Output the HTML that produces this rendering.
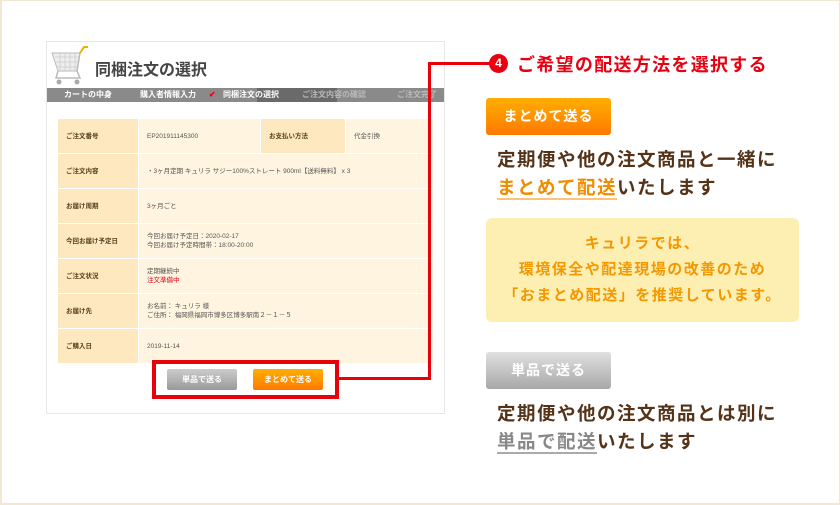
<!DOCTYPE html>
<html><head><meta charset="utf-8"><style>
*{margin:0;padding:0;box-sizing:border-box}
body{width:840px;height:505px;background:#fff;font-family:"Liberation Sans","Noto Sans CJK JP",sans-serif;position:relative;overflow:hidden}
.outer{position:absolute;left:0;top:0;width:840px;height:505px;border:1px solid #f3e6d2;border-width:1px 1px 2px 2px}
.abs{position:absolute}
.panel{left:46px;top:41px;width:399px;height:373px;border:1px solid #e6e6e6;background:#fff}
.title{left:95px;top:56px;font-size:16px;font-weight:bold;color:#444;white-space:nowrap}
.nav{left:47px;top:88px;width:397px;height:14px;background:#8a8a8a;font-size:8px;color:#fff;line-height:14px;font-weight:bold;white-space:nowrap}
.nav span{position:absolute;top:0}
.cur{left:210px;top:0;width:80px;height:14px;background:#6a6a6a}
table{position:absolute;left:57px;top:118px;width:377px;border-collapse:collapse;font-size:6.5px;color:#555}
td{height:35px;border:1px solid #fff;padding-left:8px;background:#fff4e0;vertical-align:middle;line-height:9px}
td.l{background:#fde8bf;font-weight:bold;color:#5a4020;width:81px}
.redbox{left:152px;top:360px;width:187px;height:39px;border:4px solid #e8000b}
.btn{border-radius:2px;color:#fff;font-weight:bold;text-align:center}
.sg{background:linear-gradient(#ccc,#999);}
.so{background:linear-gradient(#ffae00,#ff7a00);}
.line{background:#e8000b}
.h{left:517px;top:51px;font-size:18px;letter-spacing:1.3px;font-weight:bold;color:#e60012;white-space:nowrap}
.num{left:489px;top:54px;width:19px;height:19px;border-radius:50%;background:#e60012;color:#fff;font-size:12px;font-weight:bold;text-align:center;line-height:19px}
.desc{font-size:18.5px;letter-spacing:1.5px;font-weight:bold;color:#553318;line-height:28px;white-space:nowrap}
.yb{left:486px;top:218px;width:313px;height:104px;background:#fdefb2;border-radius:6px;color:#f39800;font-size:15px;letter-spacing:1.5px;font-weight:bold;text-align:center;line-height:26px;padding-top:13px;white-space:nowrap}
</style></head><body>
<div class="outer"></div>
<div class="abs panel"></div>
<svg class="abs" style="left:50px;top:45px" width="40" height="42" viewBox="0 0 40 42">
<path d="M2 8 L30 8 L27 26 L8 26 Z" fill="#eee" stroke="#bbb" stroke-width="1"/>
<path d="M5 12h24M6 17h22M7 22h20M10 8v18M15 8v18M20 8v18M25 8v18" stroke="#ccc" stroke-width="0.8"/>
<path d="M30 8 L34 2 L38 2" stroke="#e7b400" stroke-width="2" fill="none"/>
<path d="M27 26 L30 8 M8 26 L6 33 L30 33 L27 26" stroke="#bbb" stroke-width="1.5" fill="none"/>
<circle cx="9" cy="37" r="2.5" fill="#aaa"/><circle cx="27" cy="37" r="2.5" fill="#aaa"/>
</svg>
<div class="abs title">同梱注文の選択</div>
<div class="abs nav"><div class="abs cur"></div>
<span style="left:17px">カートの中身</span><span style="left:93px">購入者情報入力</span><span style="left:162px;color:#e60012">✔</span><span style="left:176px">同梱注文の選択</span><span style="left:255px;color:#bbb">ご注文内容の確認</span><span style="left:350px;color:#bbb">ご注文完了</span></div>
<table>
<tr><td class="l">ご注文番号</td><td style="width:122px">EP201911145300</td><td class="l" style="width:85px">お支払い方法</td><td>代金引換</td></tr>
<tr><td class="l">ご注文内容</td><td colspan="3">・3ヶ月定期 キュリラ サジー100%ストレート 900ml【送料無料】 x 3</td></tr>
<tr><td class="l">お届け周期</td><td colspan="3">3ヶ月ごと</td></tr>
<tr><td class="l">今回お届け予定日</td><td colspan="3">今回お届け予定日：2020-02-17<br>今回お届け予定時間帯：18:00-20:00</td></tr>
<tr><td class="l">ご注文状況</td><td colspan="3">定期継続中<br><span style="color:#e60012">注文準備中</span></td></tr>
<tr><td class="l">お届け先</td><td colspan="3">お名前： キュリラ 様<br>ご住所： 福岡県福岡市博多区博多駅南２－１－５</td></tr>
<tr><td class="l">ご購入日</td><td colspan="3">2019-11-14</td></tr>
</table>
<div class="abs redbox"></div>
<div class="abs btn sg" style="left:167px;top:369px;width:70px;height:21px;font-size:8px;line-height:21px">単品で送る</div>
<div class="abs btn so" style="left:253px;top:369px;width:70px;height:21px;font-size:8px;line-height:21px">まとめて送る</div>
<div class="abs line" style="left:339px;top:377px;width:92px;height:3px"></div>
<div class="abs line" style="left:428px;top:62px;width:3px;height:318px"></div>
<div class="abs line" style="left:428px;top:62px;width:64px;height:3px"></div>
<div class="abs num">4</div>
<div class="abs h">ご希望の配送方法を選択する</div>
<div class="abs btn so" style="left:486px;top:98px;width:125px;height:37px;font-size:14px;letter-spacing:1px;line-height:37px;border-radius:3px">まとめて送る</div>
<div class="abs desc" style="left:497px;top:146px">定期便や他の注文商品と一緒に<br><span style="color:#f08c00;border-bottom:2px solid #ffc27a">まとめて配送</span>いたします</div>
<div class="abs yb">キュリラでは、<br>環境保全や配達現場の改善のため<br>「おまとめ配送」を推奨しています。</div>
<div class="abs btn sg" style="left:486px;top:352px;width:125px;height:37px;font-size:14px;letter-spacing:1px;line-height:37px;border-radius:3px;background:linear-gradient(#e0e0e0,#a8a8a8)">単品で送る</div>
<div class="abs desc" style="left:497px;top:400px">定期便や他の注文商品とは別に<br><span style="color:#888;border-bottom:2px solid #aaa">単品で配送</span>いたします</div>
</body></html>
